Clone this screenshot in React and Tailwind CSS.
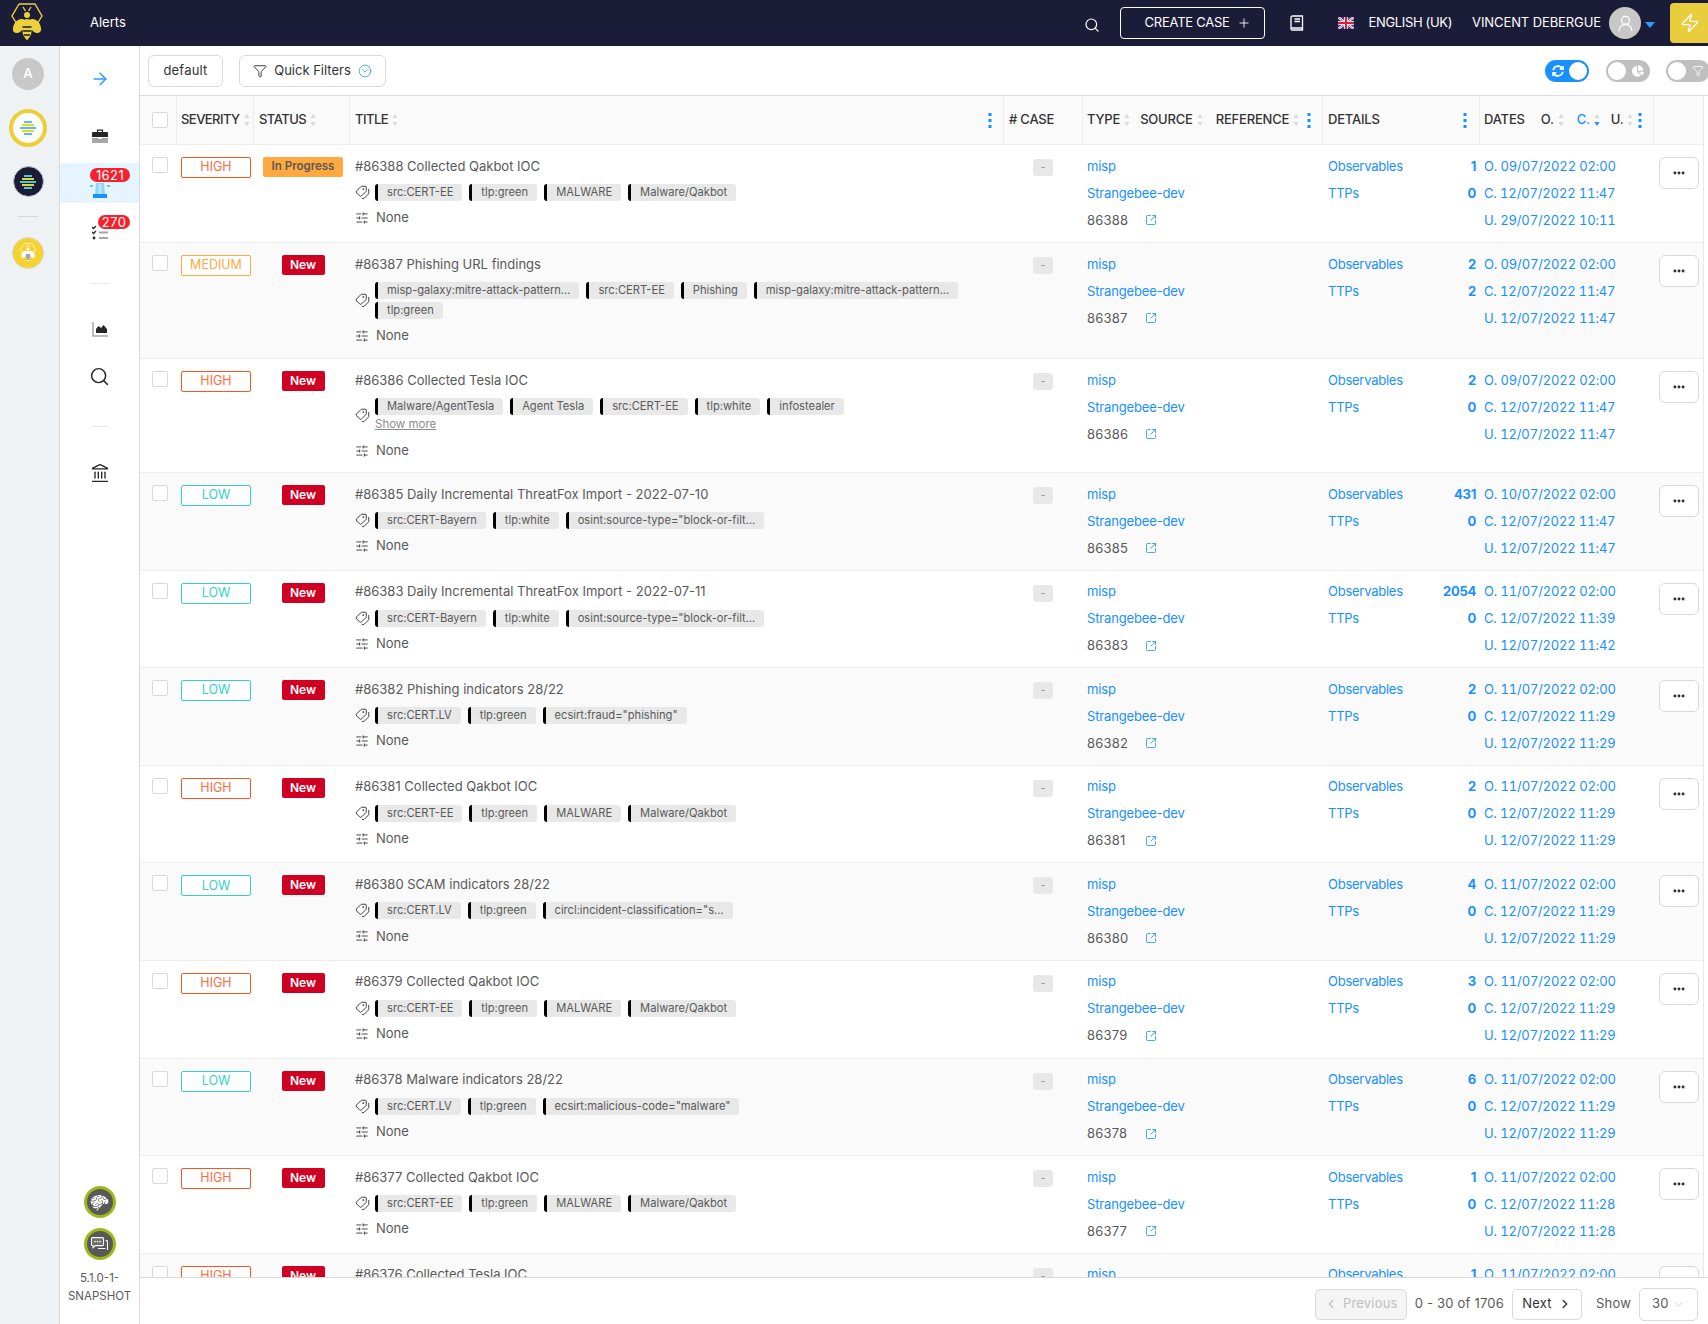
import React from "react";
import { Plus, Search, ArrowRight, Tags, SlidersHorizontal, SquareArrowOutUpRight, Zap, Funnel, CircleChevronDown, ChevronLeft, ChevronRight, ChevronDown, Ellipsis, Landmark, UserRound } from "lucide-react";
import { FaSyncAlt, FaChartPie } from "react-icons/fa";
import { GiBrain } from "react-icons/gi";

const GRID = "grid grid-cols-[37px_77px_96px_654px_79px_240px_157px_174px_1fr]";

const qak = () => ["src:CERT-EE", "tlp:green", "MALWARE", "Malware/Qakbot"];
const rows = [
  { id: 86388, sev: "HIGH", st: "In Progress", title: "Collected Qakbot IOC", tags: qak(), obs: "1", ttp: "0", o: "09/07/2022 02:00", c: "12/07/2022 11:47", u: "29/07/2022 10:11", h: "h-[98px]" },
  { id: 86387, sev: "MEDIUM", st: "New", title: "Phishing URL findings", tags: ["misp-galaxy:mitre-attack-pattern...", "src:CERT-EE", "Phishing", "misp-galaxy:mitre-attack-pattern...", "tlp:green"], obs: "2", ttp: "2", o: "09/07/2022 02:00", c: "12/07/2022 11:47", u: "12/07/2022 11:47", h: "h-[116px]" },
  { id: 86386, sev: "HIGH", st: "New", title: "Collected Tesla IOC", tags: ["Malware/AgentTesla", "Agent Tesla", "src:CERT-EE", "tlp:white", "infostealer"], more: true, obs: "2", ttp: "0", o: "09/07/2022 02:00", c: "12/07/2022 11:47", u: "12/07/2022 11:47", h: "h-[114px]" },
  { id: 86385, sev: "LOW", st: "New", title: "Daily Incremental ThreatFox Import - 2022-07-10", tags: ["src:CERT-Bayern", "tlp:white", 'osint:source-type="block-or-filt...'], obs: "431", ttp: "0", o: "10/07/2022 02:00", c: "12/07/2022 11:47", u: "12/07/2022 11:47" },
  { id: 86383, sev: "LOW", st: "New", title: "Daily Incremental ThreatFox Import - 2022-07-11", tags: ["src:CERT-Bayern", "tlp:white", 'osint:source-type="block-or-filt...'], obs: "2054", ttp: "0", o: "11/07/2022 02:00", c: "12/07/2022 11:39", u: "12/07/2022 11:42" },
  { id: 86382, sev: "LOW", st: "New", title: "Phishing indicators 28/22", tags: ["src:CERT.LV", "tlp:green", 'ecsirt:fraud="phishing"'], obs: "2", ttp: "0", o: "11/07/2022 02:00", c: "12/07/2022 11:29", u: "12/07/2022 11:29" },
  { id: 86381, sev: "HIGH", st: "New", title: "Collected Qakbot IOC", tags: qak(), obs: "2", ttp: "0", o: "11/07/2022 02:00", c: "12/07/2022 11:29", u: "12/07/2022 11:29" },
  { id: 86380, sev: "LOW", st: "New", title: "SCAM indicators 28/22", tags: ["src:CERT.LV", "tlp:green", 'circl:incident-classification="s...'], obs: "4", ttp: "0", o: "11/07/2022 02:00", c: "12/07/2022 11:29", u: "12/07/2022 11:29" },
  { id: 86379, sev: "HIGH", st: "New", title: "Collected Qakbot IOC", tags: qak(), obs: "3", ttp: "0", o: "11/07/2022 02:00", c: "12/07/2022 11:29", u: "12/07/2022 11:29" },
  { id: 86378, sev: "LOW", st: "New", title: "Malware indicators 28/22", tags: ["src:CERT.LV", "tlp:green", 'ecsirt:malicious-code="malware"'], obs: "6", ttp: "0", o: "11/07/2022 02:00", c: "12/07/2022 11:29", u: "12/07/2022 11:29" },
  { id: 86377, sev: "HIGH", st: "New", title: "Collected Qakbot IOC", tags: qak(), obs: "1", ttp: "0", o: "11/07/2022 02:00", c: "12/07/2022 11:28", u: "12/07/2022 11:28" },
  { id: 86376, sev: "HIGH", st: "New", title: "Collected Tesla IOC", tags: [], obs: "1", ttp: "0", o: "11/07/2022 02:00", c: "12/07/2022 11:28", u: "12/07/2022 11:28" },
];

const sevClass = {
  HIGH: "border-[#fa541c] text-[#ff6b3d]",
  MEDIUM: "border-[#ffa940] text-[#ffa940]",
  LOW: "border-[#36cfc9] text-[#36cfc9]",
};

function Bee({ color = "#ecd03a", className = "" }) {
  return (
    <svg viewBox="0 0 32 40" className={className} fill="none">
      <path d="M8 1h16l7 12-5 8M8 1L1 13l5 8" stroke={color} strokeWidth="1.4" />
      <circle cx="16" cy="12" r="3" fill={color} />
      <path d="M12 4l2.5 4M20 4l-2.5 4" stroke={color} strokeWidth="1.4" />
      <path d="M14 17C9 14 3 18 2 25c-1 5 4 6 7 4 3-2 5-7 5-12zM18 17c5-3 11 1 12 8 1 5-4 6-7 4-3-2-5-7-5-12z" fill={color} />
      <path d="M16 16c3 0 5 3 5 9 0 6-3 11-5 12-2-1-5-6-5-12 0-6 2-9 5-9z" fill={color} />
      <path d="M11.5 24h9M11.5 28h9M13 32h6" stroke="#1b1c38" strokeWidth="1.6" />
    </svg>
  );
}

function HiveLines() {
  return (
    <svg viewBox="0 0 16 14" className="w-[16px] h-[14px]">
      <rect x="4" y="0" width="8" height="2" fill="#4fc9c4" />
      <rect x="2" y="3" width="12" height="2" fill="#ecd03a" />
      <rect x="0" y="6" width="16" height="2" fill="#4fc9c4" />
      <rect x="2" y="9" width="12" height="2" fill="#ecd03a" />
      <rect x="4" y="12" width="8" height="2" fill="#4fc9c4" />
    </svg>
  );
}

function Sort({ active }) {
  return (
    <svg viewBox="0 0 6 14" className="w-[6px] h-[14px] ml-[4px] shrink-0">
      <path d="M3 1l2.5 4h-5z" fill="#d9d9d9" />
      <path d="M3 13L.5 9h5z" fill={active ? "#1890ff" : "#d9d9d9"} />
    </svg>
  );
}

function Dots() {
  return (
    <svg viewBox="0 0 4 15" className="w-[4px] h-[15px]">
      <rect x="0.5" y="0" width="3" height="3" fill="#1890ff" />
      <rect x="0.5" y="6" width="3" height="3" fill="#1890ff" />
      <rect x="0.5" y="12" width="3" height="3" fill="#1890ff" />
    </svg>
  );
}

function Flag() {
  return (
    <svg viewBox="0 0 16 12" className="w-[16px] h-[12px]">
      <rect width="16" height="12" fill="#2c3e8f" />
      <path d="M0 0l16 12M16 0L0 12" stroke="#fff" strokeWidth="2.4" />
      <path d="M0 0l16 12M16 0L0 12" stroke="#d8223b" strokeWidth="0.8" />
      <path d="M8 0v12M0 6h16" stroke="#fff" strokeWidth="3.6" />
      <path d="M8 0v12M0 6h16" stroke="#d8223b" strokeWidth="2" />
    </svg>
  );
}

function Book() {
  return (
    <svg viewBox="0 0 14 16" className="w-[14px] h-[16px]" fill="none" stroke="#fff" strokeWidth="1.3">
      <path d="M2.5 1h10v12h-10A1.5 1.5 0 0 0 1 14.5V2.5A1.5 1.5 0 0 1 2.5 1z" />
      <path d="M1 14.5A1.2 1.2 0 0 0 2.5 15h10v-2" />
      <path d="M4.5 4h5.5M4.5 6.5h5.5" />
    </svg>
  );
}

function Briefcase() {
  return (
    <svg viewBox="0 0 16 15" className="w-[16px] h-[15px]">
      <path d="M5.5 3V1.2h5V3" fill="none" stroke="#262626" strokeWidth="1.2" />
      <path d="M0 4a1 1 0 0 1 1-1h14a1 1 0 0 1 1 1v4H0z" fill="#262626" />
      <path d="M0 9h16v4a1 1 0 0 1-1 1H1a1 1 0 0 1-1-1z" fill="#a6a6a6" />
      <rect x="6.5" y="8" width="3" height="2" fill="#fff" />
    </svg>
  );
}

function Siren() {
  return (
    <svg viewBox="0 0 20 16" className="w-[20px] h-[16px]">
      <path d="M6 0h8l1 11H5z" fill="#91d5ff" />
      <rect x="8.5" y="1" width="3" height="10" fill="#bae7ff" />
      <rect x="3" y="11" width="14" height="4" fill="#1890ff" />
      <rect x="0" y="2" width="3" height="2" fill="#69c0ff" />
      <rect x="17" y="2" width="3" height="2" fill="#69c0ff" />
    </svg>
  );
}

function TaskIcon() {
  return (
    <svg viewBox="0 0 16 15" className="w-[16px] h-[15px]">
      <path d="M0 2l1.5 1.5L4 1M0 7l1.5 1.5L4 6" fill="none" stroke="#262626" strokeWidth="1.3" />
      <circle cx="2" cy="13" r="1.4" fill="#262626" />
      <rect x="7" y="6.5" width="9" height="2" fill="#a6a6a6" />
      <rect x="7" y="12" width="9" height="2" fill="#a6a6a6" />
    </svg>
  );
}

function AreaIcon() {
  return (
    <svg viewBox="0 0 16 15" className="w-[16px] h-[15px]">
      <path d="M1 0v14h15" fill="none" stroke="#a6a6a6" strokeWidth="1.5" />
      <path d="M4 11V7l2.5-3L9 6l2.5-3L15 7v4z" fill="#262626" />
    </svg>
  );
}

function Chat() {
  return (
    <svg viewBox="0 0 17 14" className="w-[17px] h-[14px]" fill="none" stroke="#fff" strokeWidth="1.1">
      <path d="M1.5.6h10a1 1 0 0 1 1 1v6a1 1 0 0 1-1 1H4.5L2 10.6V8.6h-.5a1 1 0 0 1-1-1v-6a1 1 0 0 1 1-1z" fill="#fff" fillOpacity="0.12" />
      <path d="M14.5 3.6h1a1 1 0 0 1 1 1v8.4M7 11.5h7.5" />
      <circle cx="4" cy="4.6" r="0.8" fill="#fff" stroke="none" />
      <circle cx="6.5" cy="4.6" r="0.8" fill="#fff" stroke="none" />
      <circle cx="9" cy="4.6" r="0.8" fill="#fff" stroke="none" />
    </svg>
  );
}

function Tag({ text }) {
  return (
    <span className="inline-flex items-center h-[17px] rounded-[3px] bg-[#e8e8e8] border-l-[3px] border-black pl-[9px] pr-[9px] text-[11.15px] leading-[17px] text-[#595959] whitespace-nowrap">
      {text}
    </span>
  );
}

function Row({ r, i }) {
  const bg = i % 2 === 0 ? "bg-white" : "bg-[#fafafa]";
  return (
    <div className={`${GRID} ${bg} ${r.h || "h-[97.6px]"} border-b border-[#eeeeee] overflow-hidden text-[13px] text-[#595959]`}>
      <div className="pl-[12px] pt-[12px]">
        <div className="w-[16px] h-[16px] bg-white border border-[#d9d9d9] rounded-[2px]" />
      </div>
      <div className="pl-[4px] pt-[12px]">
        <div className={`w-[70px] h-[21px] border rounded-[2px] bg-white flex items-center justify-center text-[12.5px] ${sevClass[r.sev]}`}>{r.sev}</div>
      </div>
      <div className="pt-[12px] pl-[2px] flex justify-center items-start">
        {r.st === "New" ? (
          <div className="w-[43px] h-[20px] rounded-[2px] bg-[#cf0022] text-white font-semibold text-[12px] flex items-center justify-center">New</div>
        ) : (
          <div className="w-[80px] h-[20px] rounded-[2px] bg-[#ffa940] text-[#595959] font-semibold text-[11.5px] flex items-center justify-center">In Progress</div>
        )}
      </div>
      <div className="pl-[5px] pt-[7.5px]">
        <div className="h-[27px] leading-[27px] text-[13px]">#{r.id} {r.title}</div>
        <div className="flex items-center mt-[4.5px]">
          <Tags className="w-[15px] h-[15px] text-[#333] mr-[5px] shrink-0 -scale-x-100" strokeWidth={1.5} />
          <div>
            <div className="flex flex-wrap gap-x-[7px] gap-y-[3px] w-[600px]">
              {r.tags.map((t, k) => <Tag key={k} text={t} />)}
            </div>
            {r.more && <div className="mt-[1px] text-[11.5px] leading-[16px] text-[#8c8c8c] underline">Show more</div>}
          </div>
        </div>
        <div className={`flex items-center h-[20px] ${r.more ? "mt-[9px]" : "mt-[7px]"}`}>
          <SlidersHorizontal className="w-[14px] h-[14px] text-[#333] mr-[7px]" strokeWidth={1.5} />
          <span>None</span>
        </div>
      </div>
      <div className="pl-[29px] pt-[14px]">
        <div className="w-[20px] h-[17px] rounded-[3px] bg-[#e8e8e8] flex items-center justify-center text-[10px] text-[#8c8c8c]">-</div>
      </div>
      <div className="pl-[4px] pt-[7.5px] leading-[27px] tracking-[-0.15px]">
        <div className="text-[#1890ff]">misp</div>
        <div className="text-[#1890ff]">Strangebee-dev</div>
        <div className="flex items-center h-[27px] tracking-[0.2px]">
          <span className="w-[58px]">{r.id}</span>
          <SquareArrowOutUpRight className="w-[12px] h-[12px] text-[#1890ff]" strokeWidth={1.6} />
        </div>
      </div>
      <div className="pl-[5px] pr-[4px] pt-[7.5px] leading-[27px] text-[#1890ff] tracking-[-0.25px]">
        <div className="flex justify-between"><span>Observables</span><b className="font-bold">{r.obs}</b></div>
        <div className="flex justify-between"><span>TTPs</span><b className="font-bold">{r.ttp}</b></div>
      </div>
      <div className="pl-[4px] pt-[7.5px] leading-[27px] text-[#1890ff] tracking-[-0.14px] tabular-nums whitespace-nowrap">
        <div>O. {r.o}</div>
        <div>C. {r.c}</div>
        <div>U. {r.u}</div>
      </div>
      <div className="pl-[5px] pt-[12px]">
        <div className="w-[40px] h-[32px] bg-white border border-[#d9d9d9] rounded-[6px] flex items-center justify-center">
          <Ellipsis className="w-[14px] h-[14px] text-[#262626]" strokeWidth={3} />
        </div>
      </div>
    </div>
  );
}

function Toggle({ on, children }) {
  return (
    <div className={`relative w-[44px] h-[22px] rounded-full shrink-0 ${on ? "bg-[#1890ff]" : "bg-[#bfbfbf]"}`}>
      <div className={`absolute top-[2px] w-[18px] h-[18px] rounded-full bg-white ${on ? "right-[2px]" : "left-[2px]"}`} />
      <div className={`absolute top-[5px] text-white ${on ? "left-[7px]" : "right-[6px]"}`}>{children}</div>
    </div>
  );
}

export default function App() {
  return (
    <div className="w-[1708px] h-[1324px] overflow-hidden flex flex-col bg-white font-['Inter','Liberation_Sans',sans-serif] text-[13px]">
      <header className="h-[46px] shrink-0 bg-[#1b1c38] flex items-center text-white text-[13px]">
        <Bee className="w-[32px] h-[40px] ml-[11px]" />
        <div className="ml-[47px]">Alerts</div>
        <div className="flex-1" />
        <Search className="w-[16px] h-[16px] mr-[20px] mt-[3px]" strokeWidth={1.8} />
        <div className="w-[145px] h-[32px] border border-white rounded-[4px] flex items-center pl-[24px] gap-[7px] tracking-[-0.25px] whitespace-nowrap">
          CREATE CASE <Plus className="w-[14px] h-[14px]" strokeWidth={1.5} />
        </div>
        <div className="ml-[25px]"><Book /></div>
        <div className="ml-[34px]"><Flag /></div>
        <div className="ml-[15px] whitespace-nowrap tracking-[-0.35px]">ENGLISH (UK)</div>
        <div className="ml-[20px] whitespace-nowrap tracking-[-0.1px]">VINCENT DEBERGUE</div>
        <div className="ml-[8px] w-[32px] h-[32px] rounded-full bg-[#c8c8c8] flex items-center justify-center">
          <UserRound className="w-[19px] h-[19px] text-white" strokeWidth={1.6} />
        </div>
        <svg viewBox="0 0 10 6" className="w-[10px] h-[6px] ml-[4px] mt-[3px]"><path d="M0 0h10L5 6z" fill="#2f9bff" /></svg>
        <div className="ml-[15px] w-[38px] h-[40px] bg-[#e8cd3c] rounded-l-[4px] flex items-center pl-[10px]">
          <Zap className="w-[20px] h-[22px] text-white" strokeWidth={1.6} />
        </div>
      </header>

      <div className="flex-1 flex min-h-0">
        <aside className="w-[60px] shrink-0 bg-[#eef2f5] border-r border-[#d9d9d9] flex flex-col items-center pt-[12px] pr-[3px]">
          <div className="w-[32px] h-[32px] rounded-full bg-[#c8c8c8] flex items-center justify-center text-white font-semibold text-[13px]">A</div>
          <div className="mt-[19px] w-[38px] h-[38px] rounded-full bg-white border-[4px] border-[#ecd03a] flex items-center justify-center"><HiveLines /></div>
          <div className="mt-[19px] w-[31px] h-[31px] rounded-full bg-[#1b1c38] border border-[#c8c8c8] flex items-center justify-center"><HiveLines /></div>
          <div className="mt-[19px] w-[20px] h-px bg-[#d9d9d9]" />
          <div className="mt-[20px] w-[32px] h-[32px] rounded-full bg-[#f4d32f] border border-[#d9d9d9] flex items-center justify-center">
            <Bee color="#fff" className="w-[16px] h-[20px]" />
          </div>
        </aside>

        <nav className="w-[80px] shrink-0 border-r border-[#d9d9d9] flex flex-col items-center">
          <ArrowRight className="w-[20px] h-[20px] text-[#2f9bff] mt-[23px]" strokeWidth={1.8} />
          <div className="mt-[40px]"><Briefcase /></div>
          <div className="relative w-full h-[40px] mt-[19px] bg-[#e6f4ff] flex items-end justify-center pb-[4px]">
            <Siren />
            <span className="absolute top-[5px] left-[30px] w-[40px] h-[14px] rounded-full bg-[#f5222d] text-white text-[13px] leading-[14px] text-center tracking-[0.4px]">1621</span>
          </div>
          <div className="relative mt-[22px] w-full flex justify-center">
            <TaskIcon />
            <span className="absolute -top-[10px] left-[38px] w-[32px] h-[14px] rounded-full bg-[#f5222d] text-white text-[13px] leading-[14px] text-center tracking-[0.4px]">270</span>
          </div>
          <div className="mt-[43px] w-[16px] h-px bg-[#e8e8e8]" />
          <div className="mt-[38px]"><AreaIcon /></div>
          <Search className="w-[21px] h-[21px] text-[#262626] mt-[29px]" strokeWidth={1.7} />
          <div className="mt-[39px] w-[16px] h-px bg-[#e8e8e8]" />
          <Landmark className="w-[20px] h-[20px] text-[#262626] mt-[36px]" strokeWidth={1.6} />
          <div className="flex-1" />
          <div className="w-[32px] h-[32px] rounded-full bg-[#595959] border-[3px] border-[#9fb81a] flex items-center justify-center">
            <GiBrain className="w-[19px] h-[19px] text-white" />
          </div>
          <div className="mt-[10px] w-[32px] h-[32px] rounded-full bg-[#595959] border-[3px] border-[#9fb81a] flex items-center justify-center">
            <Chat />
          </div>
          <div className="mt-[9px] mb-[19px] text-[11.5px] leading-[18px] text-center text-[#595959]">5.1.0-1-<br />SNAPSHOT</div>
        </nav>

        <main className="flex-1 min-w-0 flex flex-col">
          <div className="h-[50px] shrink-0 flex items-center pl-[8px] border-b border-[#dddddd]">
            <div className="h-[32px] w-[75px] border border-[#d9d9d9] rounded-[6px] flex items-center justify-center text-[#333] tracking-[0.2px]">default</div>
            <div className="ml-[16px] h-[32px] w-[147px] border border-[#d9d9d9] rounded-[6px] flex items-center justify-center gap-[7px] text-[#333]">
              <Funnel className="w-[14px] h-[14px]" strokeWidth={1.6} />
              Quick Filters
              <CircleChevronDown className="w-[14px] h-[14px] text-[#2f9bff]" strokeWidth={1.4} />
            </div>
            <div className="flex-1" />
            <Toggle on><FaSyncAlt className="w-[12px] h-[12px]" /></Toggle>
            <div className="ml-[17px]"><Toggle><FaChartPie className="w-[12px] h-[12px]" /></Toggle></div>
            <div className="ml-[16px] w-[42px] overflow-hidden"><Toggle><Funnel className="w-[12px] h-[12px]" strokeWidth={1.6} /></Toggle></div>
          </div>

          <div className="flex-1 min-h-0 overflow-hidden mr-[4px] border-r border-[#e8e8e8]">
            <div className={`${GRID} h-[49px] bg-[#fafafa] border-b border-[#eeeeee] text-[13px] font-medium text-[#333] tracking-[-0.2px]`}>
              <div className="border-r border-[#eeeeee] flex items-center pl-[12px]">
                <div className="w-[16px] h-[16px] bg-white border border-[#d9d9d9] rounded-[2px]" />
              </div>
              <div className="border-r border-[#eeeeee] flex items-center pl-[4px] tracking-[-0.55px]">SEVERITY<Sort /></div>
              <div className="border-r border-[#eeeeee] flex items-center pl-[5px] tracking-[-0.55px]">STATUS<Sort /></div>
              <div className="border-r border-[#eeeeee] flex items-center pl-[5px] tracking-[-0.5px]">TITLE<Sort /><div className="flex-1" /><div className="mr-[11px]"><Dots /></div></div>
              <div className="border-r border-[#eeeeee] flex items-center pl-[5px]"># CASE</div>
              <div className="border-r border-[#eeeeee] flex items-center pl-[4px]">
                <span>TYPE</span><Sort /><span className="ml-[10px]">SOURCE</span><Sort /><span className="ml-[13px]">REFERENCE</span><Sort /><div className="flex-1" /><div className="mr-[11px]"><Dots /></div>
              </div>
              <div className="border-r border-[#eeeeee] flex items-center pl-[5px]">DETAILS<div className="flex-1" /><div className="mr-[12px]"><Dots /></div></div>
              <div className="border-r border-[#eeeeee] flex items-center pl-[4px]">
                <span>DATES</span><span className="ml-[16px]">O.</span><Sort /><span className="ml-[13px] text-[#1890ff]">C.</span><Sort active /><span className="ml-[11px]">U.</span><Sort /><div className="ml-[5px]"><Dots /></div>
              </div>
              <div />
            </div>
            {rows.map((r, i) => <Row key={r.id} r={r} i={i} />)}
          </div>

          <footer className="h-[47px] shrink-0 border-t border-[#d9d9d9] flex items-center justify-end pr-[10px] pt-[6px] text-[#595959] text-[13px] tracking-[0.2px]">
            <div className="w-[92px] h-[31px] bg-[#f5f5f5] border border-[#d9d9d9] rounded-[5px] flex items-center justify-center gap-[5px] text-[#bfbfbf]">
              <ChevronLeft className="w-[14px] h-[14px]" strokeWidth={2} />Previous
            </div>
            <div className="ml-[8px] whitespace-nowrap">0 - 30 of 1706</div>
            <div className="ml-[8px] w-[70px] h-[31px] bg-white border border-[#d9d9d9] rounded-[5px] flex items-center justify-center gap-[6px] text-[#333]">
              Next<ChevronRight className="w-[14px] h-[14px]" strokeWidth={2.4} />
            </div>
            <div className="ml-[14px]">Show</div>
            <div className="ml-[8px] w-[59px] h-[33px] bg-white border border-[#d9d9d9] rounded-[5px] flex items-center justify-between px-[12px]">
              30<ChevronDown className="w-[13px] h-[13px] text-[#bfbfbf]" strokeWidth={1.5} />
            </div>
          </footer>
        </main>
      </div>
    </div>
  );
}
